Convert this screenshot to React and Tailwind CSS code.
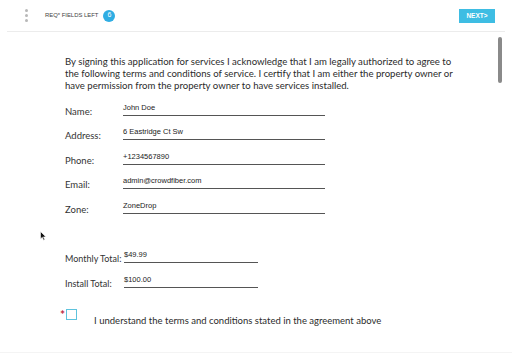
import React from 'react';

const fields = [
  { label: 'Name:', value: 'John Doe' },
  { label: 'Address:', value: '6 Eastridge Ct Sw' },
  { label: 'Phone:', value: '+1234567890' },
  { label: 'Email:', value: 'admin@crowdfiber.com' },
  { label: 'Zone:', value: 'ZoneDrop' },
];

const totals = [
  { label: 'Monthly Total:', value: '$49.99' },
  { label: 'Install Total:', value: '$100.00' },
];

export default function App() {
  return (
    <div className="w-[512px] h-[353px] bg-white overflow-hidden relative font-['Lato',sans-serif] text-[#333]">
      {/* HEADER */}
      <div className="mx-[7px] h-[32px] border-b border-[#ececec] flex items-center">
        <div className="ml-[18px] flex flex-col gap-[2px]">
          <span className="w-[3px] h-[3px] rounded-full bg-[#b8b8b8]" />
          <span className="w-[3px] h-[3px] rounded-full bg-[#b8b8b8]" />
          <span className="w-[3px] h-[3px] rounded-full bg-[#b8b8b8]" />
        </div>
        <span className="ml-[17px] text-[5.9px] text-[#444] font-['Liberation_Sans',sans-serif]">REQ* FIELDS LEFT</span>
        <span className="ml-[5px] w-[12px] h-[12px] rounded-full bg-[#2fade3] text-white text-[7px] flex items-center justify-center font-['Liberation_Sans',sans-serif]">6</span>
        <button className="ml-auto mr-[10px] w-[36px] h-[14px] bg-[#3ebde3] text-white text-[6.5px] font-bold font-['Liberation_Sans',sans-serif] flex items-center justify-center">
          NEXT&gt;
        </button>
      </div>

      {/* SCROLLBAR */}
      <div className="absolute left-[498px] top-[37px] w-[4px] h-[46px] rounded-full bg-[#8a8a8a]" />

      {/* CONTENT */}
      <div className="pl-[65px] pt-[24px]">
        <p className="w-[396px] text-[9.6px] leading-[12px] text-[#2b2b2b]">
          By signing this application for services I acknowledge that I am legally authorized to agree to the following terms and conditions of service. I certify that I am either the property owner or have permission from the property owner to have services installed.
        </p>

        <div className="flex flex-col">
          {fields.map(f => (
            <div key={f.label} className="h-[24.5px] flex items-end">
              <span className="w-[58px] text-[9.5px] leading-[12px] text-[#333] -mb-[1px]">{f.label}</span>
              <div className="w-[202px] border-b border-[#555] pb-[3px] text-[7.5px] leading-[9px] text-[#222] font-['Liberation_Sans',sans-serif] mb-[1px]">
                {f.value}
              </div>
            </div>
          ))}
        </div>

        <div className="mt-[24px] flex flex-col">
          {totals.map(t => (
            <div key={t.label} className="h-[25px] flex items-end">
              <span className="w-[59px] whitespace-nowrap text-[9px] leading-[12px] text-[#333] -mb-[1px]">{t.label}</span>
              <div className="w-[134px] border-b border-[#555] pb-[3px] text-[7.5px] leading-[9px] text-[#222] font-['Liberation_Sans',sans-serif] mb-[1px]">
                {t.value}
              </div>
            </div>
          ))}
        </div>

        <div className="mt-[20px] -ml-[5px] flex items-start">
          <span className="text-[#c0283e] text-[12px] font-bold leading-[10px] mt-[1px]">*</span>
          <span className="ml-[1px] w-[11px] h-[11px] border-[1.5px] border-[#5ec3dd] bg-white" />
          <span className="ml-[17px] mt-[6px] text-[9.5px] leading-[12px] text-[#2b2b2b]">
            I understand the terms and conditions stated in the agreement above
          </span>
        </div>
      </div>

      {/* CURSOR */}
      <svg className="absolute left-[40px] top-[231px]" width="7" height="10" viewBox="0 0 7 10">
        <path d="M0.5 0.5 L0.5 8 L2.3 6.3 L3.6 9.3 L4.8 8.8 L3.5 5.9 L6 5.9 Z" fill="#111" stroke="#fff" strokeWidth="0.6" />
      </svg>

      {/* BOTTOM EDGE */}
      <div className="absolute left-0 right-0 bottom-0 h-[1px] bg-[#f4f4f4]" />
    </div>
  );
}
